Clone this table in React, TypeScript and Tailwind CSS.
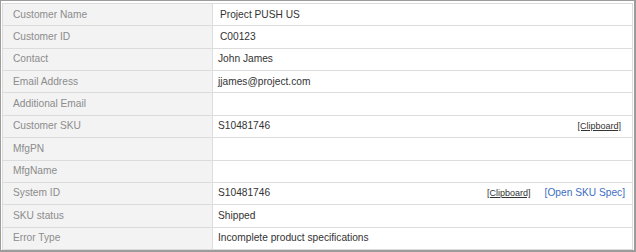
type Row = {
    label: string
    value?: string
    indent?: string
    clipboard?: boolean
    spec?: boolean
}

const rows: Row[] = [
    { label: "Customer Name", value: "Project PUSH US", indent: "pl-[7px]" },
    { label: "Customer ID", value: "C00123", indent: "pl-[7px]" },
    { label: "Contact", value: "John James" },
    { label: "Email Address", value: "jjames@project.com" },
    { label: "Additional Email" },
    { label: "Customer SKU", value: "S10481746", clipboard: true },
    { label: "MfgPN" },
    { label: "MfgName" },
    { label: "System ID", value: "S10481746", clipboard: true, spec: true },
    { label: "SKU status", value: "Shipped" },
    { label: "Error Type", value: "Incomplete product specifications" },
]

const App = () => {
    return (
        <div className="w-[636px] h-[252px] bg-white border-t border-l border-r-2 border-b-2 border-[#9c9c9c] pt-[2px] pl-[1px] pr-[1px] font-['Liberation_Sans',Arial,sans-serif] text-[10.2px]">
            <table className="w-[631px] h-[247px] border-collapse table-fixed">
                <tbody>
                    {rows.map((row) => (
                        <tr key={row.label}>
                            <td className="w-[210px] bg-[#f3f3f3] border border-[#dcdcdc] pl-[10px] text-[#8c8c8c] leading-none">
                                {row.label}
                            </td>
                            <td className={`border border-[#dcdcdc] text-[#333333] leading-none ${row.indent ?? "pl-[5px]"} ${row.spec ? "pr-[7px]" : "pr-[11px]"}`}>
                                <div className="flex items-center">
                                    <span>{row.value}</span>
                                    {row.clipboard && (
                                        <span className="ml-auto text-[9px] text-[#333333] underline">[Clipboard]</span>
                                    )}
                                    {row.spec && (
                                        <span className="ml-[14px] text-[#3d6fc1]">[Open SKU Spec]</span>
                                    )}
                                </div>
                            </td>
                        </tr>
                    ))}
                </tbody>
            </table>
        </div>
    )
}

export default App
